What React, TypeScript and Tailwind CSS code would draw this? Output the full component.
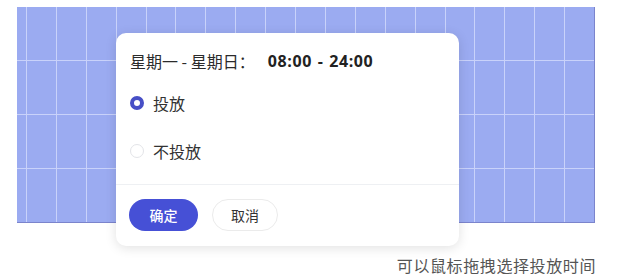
const rows = [0, 1, 2, 3];
const cols = Array.from({ length: 20 }, (_, i) => i);

function TimeGrid() {
  return (
    <div className="ml-[17px] mt-[7px] h-[216px] w-[578px] border-b border-r border-[#7b84cc] bg-[#c9d2fa]">
      <div className="grid h-full w-full grid-cols-[9px_repeat(19,1fr)] grid-rows-4 gap-px">
        {rows.map((r) =>
          cols.map((c) => <div key={`${r}-${c}`} className="bg-[#9babf1]" />)
        )}
      </div>
    </div>
  );
}

function Radio({ checked, label }: { checked?: boolean; label: string }) {
  return (
    <label className="flex h-5 items-center gap-[9px] leading-5">
      <span
        className={
          checked
            ? "box-border h-[14px] w-[14px] rounded-full border-[4px] border-[#474fc6] bg-white"
            : "box-border h-[14px] w-[14px] rounded-full border border-[#e3e4e8] bg-white"
        }
      />
      <span className="text-[16px] text-[#333]">{label}</span>
    </label>
  );
}

function Popover() {
  return (
    <div className="absolute left-[116px] top-[33px] flex h-[213px] w-[343px] flex-col rounded-[10px] bg-white shadow-[0_2px_12px_rgba(0,0,0,0.12)]">
      <div className="px-[14px] pt-[18px]">
        <div className="flex h-5 items-center text-[16px] leading-5 text-[#2b2b2b]">
          <span>星期一 - 星期日：</span>
          <span className="ml-[13px] font-bold tracking-[0.6px] text-[#222] [font-family:'Open_Sans',sans-serif] [word-spacing:1px]">08:00 - 24:00</span>
        </div>
        <div className="mt-[22px] flex flex-col gap-[28px]">
          <Radio checked label="投放" />
          <Radio label="不投放" />
        </div>
      </div>
      <div className="mt-[23px] h-px bg-[#eef0f3]" />
      <div className="flex gap-[14px] px-[13px] pt-[14px]">
        <button className="h-8 w-[69px] rounded-full bg-[#4650d6] text-[14px] font-medium text-white">确定</button>
        <button className="h-8 w-[66px] rounded-full border border-[#ebebeb] bg-white text-[14px] text-[#333]">取消</button>
      </div>
    </div>
  );
}

export default function App() {
  return (
    <div className="relative h-[280px] w-[622px] overflow-hidden bg-white [font-family:'Noto_Sans_CJK_SC',sans-serif]">
      <TimeGrid />
      <div className="mt-[32px] pr-[26px] text-right text-[16px] leading-5 tracking-[0.6px] text-[#555]">可以鼠标拖拽选择投放时间</div>
      <Popover />
    </div>
  );
}
